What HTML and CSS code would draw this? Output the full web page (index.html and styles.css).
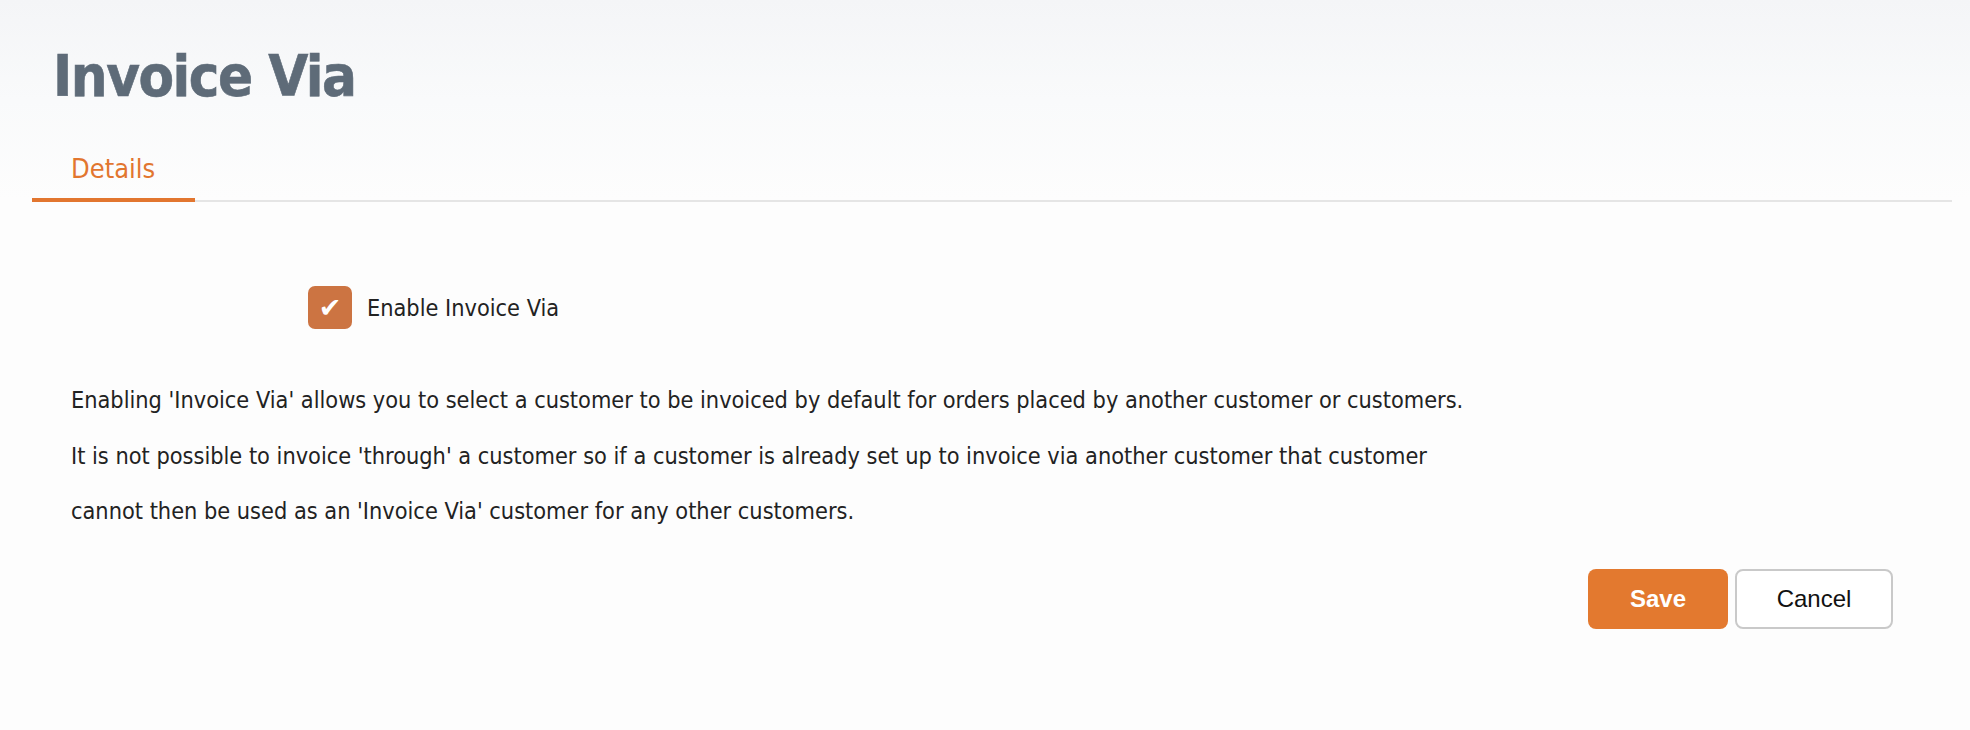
FILE: index.html
```html
<!DOCTYPE html>
<html>
<head>
<meta charset="utf-8">
<link rel="stylesheet" href="styles.css">
</head>
<body>
<div class="page">
  <h1 class="title">Invoice Via</h1>
  <div class="tabs">
    <div class="tab active">Details</div>
  </div>
  <div class="content">
    <label class="check-row">
      <span class="checkbox"><span class="tick">✔</span></span>
      <span class="check-label">Enable Invoice Via</span>
    </label>
    <div class="desc">
      <p>Enabling 'Invoice Via' allows you to select a customer to be invoiced by default for orders placed by another customer or customers.</p>
      <p>It is not possible to invoice 'through' a customer so if a customer is already set up to invoice via another customer that customer<br>cannot then be used as an 'Invoice Via' customer for any other customers.</p>
    </div>
    <div class="actions">
      <button class="btn btn-save">Save</button>
      <button class="btn btn-cancel">Cancel</button>
    </div>
  </div>
</div>
</body>
</html>
```
FILE: styles.css
```css
html, body {
  margin: 0;
  padding: 0;
}
body {
  width: 1970px;
  height: 730px;
  background: linear-gradient(to bottom, #f4f5f7 0px, #f9fafb 100px, #fdfdfd 200px, #fdfdfd 730px);
  font-family: "DejaVu Sans Condensed", "DejaVu Sans", sans-serif;
  color: #222;
  overflow: hidden;
}
.page {
  padding: 0 18px 0 32px;
}
.title {
  margin: 0;
  padding: 42px 0 0 21px;
  font-family: "DejaVu Sans Condensed", "DejaVu Sans", sans-serif;
  font-weight: bold;
  font-size: 57.6px;
  line-height: 70px;
  color: #5e6b78;
  letter-spacing: -1.5px;
  -webkit-text-stroke: 0.6px #5e6b78;
}
.tabs {
  display: flex;
  margin-top: 42px;
  border-bottom: 2px solid #e5e5e5;
}
.tab {
  width: 163px;
  box-sizing: border-box;
  padding: 0 0 14px 39px;
  font-size: 27px;
  line-height: 30px;
  color: #e2762f;
  margin-bottom: -2px;
}
.tab.active {
  border-bottom: 4px solid #e2762f;
}
.check-row {
  display: flex;
  align-items: center;
  margin: 84px 0 0 276px;
  gap: 15px;
}
.checkbox {
  width: 44px;
  height: 43px;
  border-radius: 7px;
  background: #cc7442;
  display: flex;
  align-items: center;
  justify-content: center;
}
.tick {
  color: #fff;
  font-family: "DejaVu Sans", sans-serif;
  font-size: 27px;
  line-height: 1;
}
.check-label {
  font-size: 23.3px;
  color: #222;
}
.desc {
  margin: 43px 0 0 39px;
  font-size: 23.3px;
  line-height: 55.5px;
  color: #222;
}
.desc p {
  margin: 0;
}
.actions {
  display: flex;
  justify-content: flex-end;
  gap: 7px;
  margin: 30px 59px 0 0;
}
.btn {
  height: 60px;
  border-radius: 8px;
  font-family: "Liberation Sans", Arial, sans-serif;
  font-size: 24px;
  cursor: pointer;
  padding: 0;
}
.btn-save {
  width: 140px;
  background: #e3792f;
  border: none;
  color: #fff;
  font-weight: bold;
}
.btn-cancel {
  width: 158px;
  background: #fff;
  border: 2px solid #c9c9c9;
  color: #111;
}
```
